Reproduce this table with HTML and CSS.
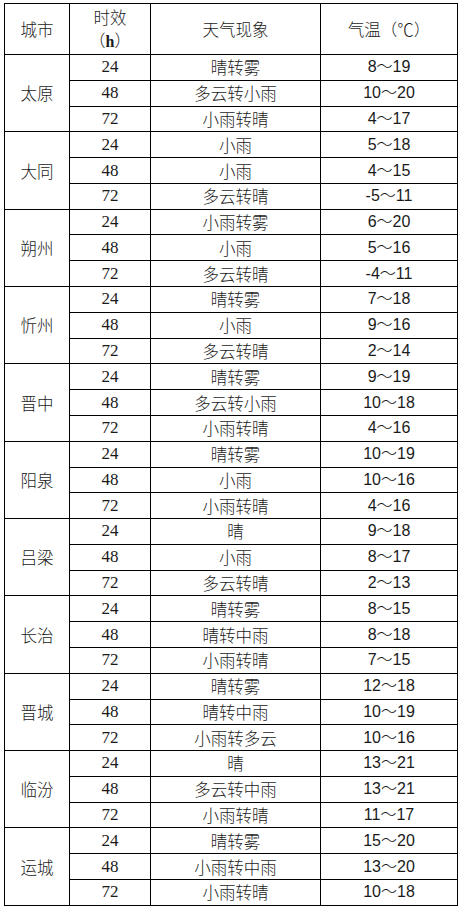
FILE: index.html
```html
<!DOCTYPE html>
<html lang="zh-CN">
<head>
<meta charset="utf-8">
<title>天气预报</title>
<link rel="stylesheet" href="styles.css">
</head>
<body>
<table class="forecast">
  <colgroup>
    <col class="c-city"><col class="c-hour"><col class="c-wx"><col class="c-temp">
  </colgroup>
  <thead>
    <tr class="head">
      <th>城市</th>
      <th><span class="hl">时效</span><span class="hl">（<b class="h">h</b>）</span></th>
      <th>天气现象</th>
      <th>气温（℃）</th>
    </tr>
  </thead>
  <tbody>
    <tr><td class="city" rowspan="3">太原</td><td class="hr">24</td><td>晴转雾</td><td class="t">8～19</td></tr>
    <tr><td class="hr">48</td><td>多云转小雨</td><td class="t">10～20</td></tr>
    <tr><td class="hr">72</td><td>小雨转晴</td><td class="t">4～17</td></tr>

    <tr><td class="city" rowspan="3">大同</td><td class="hr">24</td><td>小雨</td><td class="t">5～18</td></tr>
    <tr><td class="hr">48</td><td>小雨</td><td class="t">4～15</td></tr>
    <tr><td class="hr">72</td><td>多云转晴</td><td class="t">-5～11</td></tr>

    <tr><td class="city" rowspan="3">朔州</td><td class="hr">24</td><td>小雨转雾</td><td class="t">6～20</td></tr>
    <tr><td class="hr">48</td><td>小雨</td><td class="t">5～16</td></tr>
    <tr><td class="hr">72</td><td>多云转晴</td><td class="t">-4～11</td></tr>

    <tr><td class="city" rowspan="3">忻州</td><td class="hr">24</td><td>晴转雾</td><td class="t">7～18</td></tr>
    <tr><td class="hr">48</td><td>小雨</td><td class="t">9～16</td></tr>
    <tr><td class="hr">72</td><td>多云转晴</td><td class="t">2～14</td></tr>

    <tr><td class="city" rowspan="3">晋中</td><td class="hr">24</td><td>晴转雾</td><td class="t">9～19</td></tr>
    <tr><td class="hr">48</td><td>多云转小雨</td><td class="t">10～18</td></tr>
    <tr><td class="hr">72</td><td>小雨转晴</td><td class="t">4～16</td></tr>

    <tr><td class="city" rowspan="3">阳泉</td><td class="hr">24</td><td>晴转雾</td><td class="t">10～19</td></tr>
    <tr><td class="hr">48</td><td>小雨</td><td class="t">10～16</td></tr>
    <tr><td class="hr">72</td><td>小雨转晴</td><td class="t">4～16</td></tr>

    <tr><td class="city" rowspan="3">吕梁</td><td class="hr">24</td><td>晴</td><td class="t">9～18</td></tr>
    <tr><td class="hr">48</td><td>小雨</td><td class="t">8～17</td></tr>
    <tr><td class="hr">72</td><td>多云转晴</td><td class="t">2～13</td></tr>

    <tr><td class="city" rowspan="3">长治</td><td class="hr">24</td><td>晴转雾</td><td class="t">8～15</td></tr>
    <tr><td class="hr">48</td><td>晴转中雨</td><td class="t">8～18</td></tr>
    <tr><td class="hr">72</td><td>小雨转晴</td><td class="t">7～15</td></tr>

    <tr><td class="city" rowspan="3">晋城</td><td class="hr">24</td><td>晴转雾</td><td class="t">12～18</td></tr>
    <tr><td class="hr">48</td><td>晴转中雨</td><td class="t">10～19</td></tr>
    <tr><td class="hr">72</td><td>小雨转多云</td><td class="t">10～16</td></tr>

    <tr><td class="city" rowspan="3">临汾</td><td class="hr">24</td><td>晴</td><td class="t">13～21</td></tr>
    <tr><td class="hr">48</td><td>多云转中雨</td><td class="t">13～21</td></tr>
    <tr><td class="hr">72</td><td>小雨转晴</td><td class="t">11～17</td></tr>

    <tr><td class="city" rowspan="3">运城</td><td class="hr">24</td><td>晴转雾</td><td class="t">15～20</td></tr>
    <tr><td class="hr">48</td><td>小雨转中雨</td><td class="t">13～20</td></tr>
    <tr><td class="hr">72</td><td>小雨转晴</td><td class="t">10～18</td></tr>
  </tbody>
</table>
</body>
</html>
```
FILE: styles.css
```css
html, body {
  margin: 0;
  padding: 0;
  background: #ffffff;
}
body {
  padding: 3px 0 0 4px;
  font-family: "Noto Sans CJK SC", "Noto Sans", sans-serif;
  font-weight: 300;
  color: #1a1a1a;
}
.forecast {
  border-collapse: collapse;
  table-layout: fixed;
  width: 453px;
  font-size: 16.5px;
}
.c-city { width: 65px; }
.c-hour { width: 81px; }
.c-wx { width: 170px; }
.c-temp { width: 137px; }

.forecast th,
.forecast td {
  border: 1px solid #000000;
  padding: 0;
  text-align: center;
  vertical-align: middle;
  font-weight: 300;
  line-height: 20px;
}
.head th {
  height: 50px;
}
.forecast tbody td {
  height: 24.79px;
}
.hl {
  display: block;
  line-height: 23px;
}
.h {
  font-family: "Liberation Serif", serif;
  font-weight: bold;
  font-size: 16px;
}
.hr {
  font-family: "Liberation Serif", serif;
  font-size: 17px;
  font-weight: normal;
  color: #1a1a1a;
}
.t {
  font-family: "Liberation Sans", "Noto Sans CJK SC", sans-serif;
  font-size: 16px;
}
.city {
  font-size: 16.5px;
}
```
